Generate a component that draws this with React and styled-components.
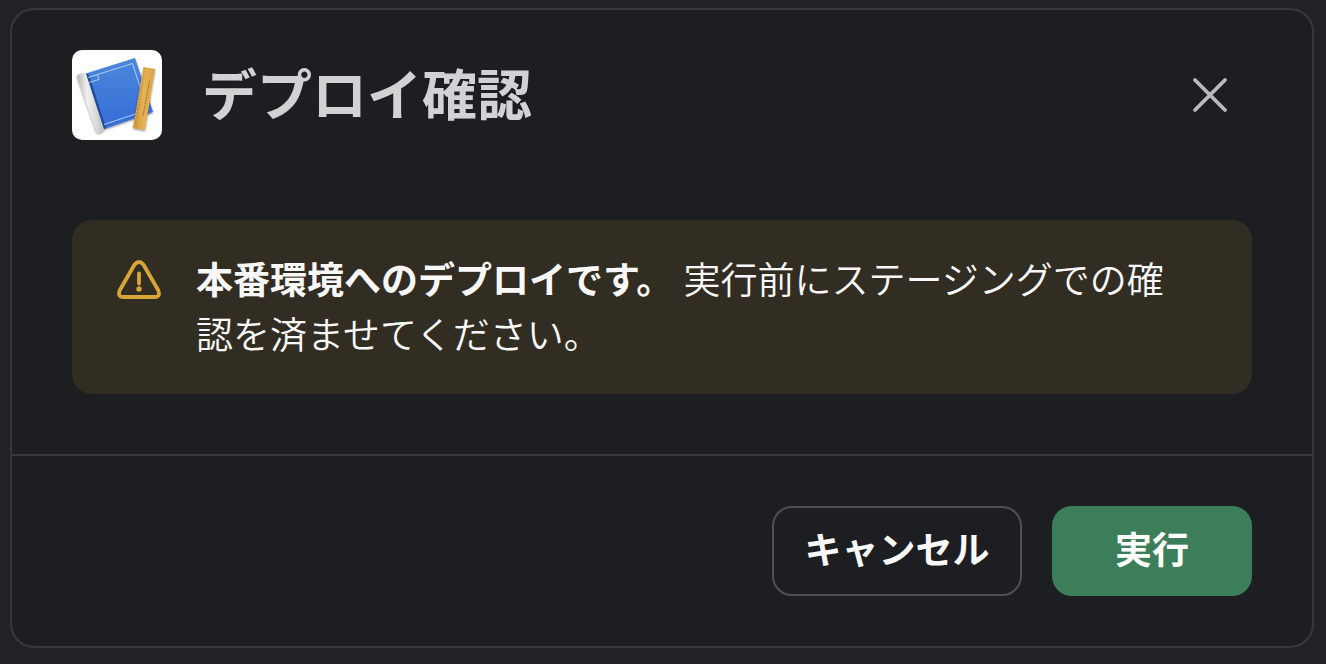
import React from 'react';
import styled, { createGlobalStyle } from 'styled-components';

const GlobalStyle = createGlobalStyle`
  * {
    box-sizing: border-box;
  }

  body {
    margin: 0;
    min-height: 100vh;
    background-color: #212226;
    color: #f8f8f8;
    font-family: 'Liberation Sans', 'Noto Sans CJK JP', sans-serif;
  }
`;

const Backdrop = styled.div`
  min-height: 100vh;
  padding: 8px 12px 16px 10px;
`;

const Dialog = styled.section`
  background-color: #1d1e22;
  border: 2px solid #37383c;
  border-radius: 24px;
`;

const Header = styled.header`
  display: flex;
  align-items: center;
  gap: 40px;
  padding: 40px 60px;
`;

const AppIcon = styled.svg`
  width: 90px;
  height: 90px;
  flex-shrink: 0;
  border-radius: 10px;
  background-color: #ffffff;
`;

const Title = styled.h1`
  flex: 1;
  margin: 0;
  padding-top: 2px;
  font-size: 55px;
  line-height: 80px;
  font-weight: bold;
  color: #d1d2d3;
`;

const CloseButton = styled.button`
  display: flex;
  align-items: center;
  justify-content: center;
  width: 84px;
  height: 84px;
  padding: 0;
  border: none;
  border-radius: 20px;
  background: none;
  color: #b9babd;
  cursor: pointer;
`;

const Body = styled.div`
  padding: 40px 60px 60px;
`;

const Alert = styled.div`
  display: flex;
  align-items: flex-start;
  gap: 34px;
  padding: 34px 60px 30px 44px;
  border-radius: 20px;
  background-color: #322d23;
`;

const WarningIcon = styled.svg`
  flex-shrink: 0;
  width: 46px;
  height: 51px;
`;

const AlertText = styled.p`
  margin: 0;
  font-size: 37px;
  font-weight: 350;
  line-height: 55px;
`;

const AlertLead = styled.strong`
  font-weight: bold;
`;

const Footer = styled.footer`
  display: flex;
  justify-content: flex-end;
  gap: 30px;
  padding: 50px 60px;
  border-top: 2px solid #37383c;
`;

const Button = styled.button`
  height: 90px;
  min-width: ${({ $primary }) => ($primary ? '200px' : '250px')};
  padding: 0 30px 6px;
  border: 2px solid ${({ $primary }) => ($primary ? '#3d7e5a' : '#4f5054')};
  border-radius: 20px;
  background-color: ${({ $primary }) => ($primary ? '#3d7e5a' : 'transparent')};
  color: ${({ $primary }) => ($primary ? '#ffffff' : '#f8f8f8')};
  font-family: inherit;
  font-size: 37px;
  font-weight: bold;
  cursor: pointer;
`;

const BlueprintIcon = () => (
  <AppIcon viewBox="0 0 90 90" aria-hidden="true">
    <defs>
      <linearGradient id="cover" x1="0" y1="0" x2="0" y2="1">
        <stop offset="0" stopColor="#4a88dc" />
        <stop offset="1" stopColor="#356bd6" />
      </linearGradient>
      <linearGradient id="roll" x1="0" y1="0.1" x2="1" y2="0">
        <stop offset="0" stopColor="#b4b4b4" />
        <stop offset="0.35" stopColor="#f0f0f0" />
        <stop offset="0.65" stopColor="#d8d8d8" />
        <stop offset="1" stopColor="#b4b4b4" />
      </linearGradient>
      <linearGradient id="wood" x1="0" y1="0" x2="1" y2="0">
        <stop offset="0" stopColor="#cf9a3e" />
        <stop offset="0.5" stopColor="#e5b254" />
        <stop offset="1" stopColor="#d9a447" />
      </linearGradient>
      <filter id="shadow" x="-20%" y="-20%" width="140%" height="140%">
        <feDropShadow dx="0" dy="1" stdDeviation="1.2" floodOpacity="0.5" />
      </filter>
    </defs>
    <g filter="url(#shadow)">
      <path d="M14 23.5 63 8l18 54-49 17z" fill="url(#cover)" />
      <path d="M5 26.5c0-2 6-4 9-3l18 55.5c-1 3-5 4.5-7.5 3z" fill="url(#roll)" />
    </g>
    <path d="m14 23.5 3 1.5 17 53-2 1z" fill="#204c9c" />
    <path
      d="M16 27.5 60.5 13.5 75.5 60 32 74.5M17 32.5 27 29.5 25.5 24.5"
      fill="none"
      stroke="#cfe0f8"
      strokeWidth="0.8"
    />
    <g filter="url(#shadow)">
      <path d="M71.5 17 83 19 73 80 61 78z" fill="url(#wood)" />
    </g>
    <path d="M73 18.5 63 77.5" stroke="#a87c2c" strokeWidth="2" strokeDasharray="0.6 2" />
    <path d="M77.5 31 71 66" stroke="#8a6524" strokeWidth="1" strokeDasharray="1 0.6" />
  </AppIcon>
);

const App = () => {
  return (
    <Backdrop>
      <GlobalStyle />
      <Dialog role="dialog" aria-labelledby="dialog-title">
        <Header>
          <BlueprintIcon />
          <Title id="dialog-title">デプロイ確認</Title>
          <CloseButton type="button" aria-label="閉じる">
            <svg width="36" height="36" viewBox="0 0 36 36" fill="none" stroke="currentColor" strokeWidth="3.8" strokeLinecap="round">
              <path d="M3 3l30 30M33 3L3 33" />
            </svg>
          </CloseButton>
        </Header>

        <Body>
          <Alert role="alert">
            <WarningIcon viewBox="0 2 46 51" fill="none" stroke="#daa537" strokeWidth="3.8" strokeLinecap="round" strokeLinejoin="round" aria-hidden="true">
              <path d="M18.6 12.5Q23 7.5 27.4 12.5L42.4 38.5Q44.5 44.8 39 45H7Q1.5 44.8 3.6 38.5Z" />
              <path d="M23 21.5v10" />
              <circle cx="23" cy="37" r="2.7" fill="#daa537" stroke="none" />
            </WarningIcon>
            <AlertText>
              <AlertLead>本番環境へのデプロイです。</AlertLead>{' '}
              <span>実行前にステージングでの確認を済ませてください。</span>
            </AlertText>
          </Alert>
        </Body>

        <Footer>
          <Button type="button">キャンセル</Button>
          <Button type="button" $primary>実行</Button>
        </Footer>
      </Dialog>
    </Backdrop>
  );
};

export default App;
